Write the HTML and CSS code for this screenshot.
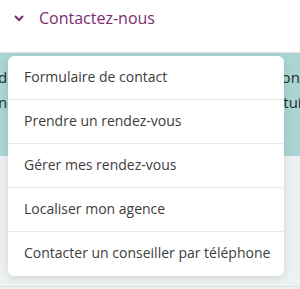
FILE: index.html
```
<!DOCTYPE html>
<html>
<head>
    <title>Contactez-nous</title>
    <link rel="stylesheet" href="styles.css">
</head>
<body>
    <div class="page">
        <div class="accordion">
            <svg class="chevron" width="12" height="8" viewBox="0 0 12 8">
                <path d="M2 2 L6 6 L10 2" fill="none" stroke="#7b2c6f" stroke-width="2"/>
            </svg>
            <span class="accordion-title">Contactez-nous</span>
        </div>
        <div class="hero">
            <div class="hero-line"><span>de nos conseillers</span><span>à vos questions</span></div>
            <div class="hero-line"><span>ne vous coûte rien,</span><span>c'est gratuit</span></div>
        </div>
        <div class="footer-zone"></div>

        <!-- menu deroulant -->
        <ul class="menu">
            <li class="menu-item">Formulaire de contact</li>
            <li class="menu-item">Prendre un rendez-vous</li>
            <li class="menu-item">Gérer mes rendez-vous</li>
            <li class="menu-item">Localiser mon agence</li>
            <li class="menu-item">Contacter un conseiller par téléphone</li>
        </ul>
    </div>
</body>
</html>
```
FILE: styles.css
```
body {
    margin: 0;
    font-family: "Open Sans", "Noto Sans", sans-serif;
    background-color: #edf1f2;
}
.page {
    position: relative;
    height: 289px;
    overflow: hidden;
}
.accordion {
    display: flex;
    align-items: flex-start;
    height: 53px;
    padding: 7px 0 0 13px;
    box-sizing: border-box;
    background-color: #fff;
    border-bottom: 1px solid #e4e7e8;
}
.chevron {
    margin: 7px 14px 0 0;
}
.accordion-title {
    color: #7b2c6f;
    font-size: 16px;
    font-weight: 500;
    line-height: 22px;
}
.hero {
    background-color: #a9d6d2;
    height: 103px;
    padding-top: 12px;
    box-sizing: border-box;
}
.hero-line {
    display: flex;
    justify-content: space-between;
    font-size: 15px;
    line-height: 25px;
    color: #1f2a2e;
    margin: 0 -7px 0 -2px;
    white-space: nowrap;
}
.footer-zone {
    height: 130px;
    border-bottom: 1px solid #dde2e4;
}
.menu {
    position: absolute;
    top: 56px;
    left: 8px;
    width: 276px;
    margin: 0;
    padding: 0;
    list-style: none;
    background-color: #fff;
    border-radius: 6px;
    box-shadow: 0 2px 8px rgba(0, 0, 0, 0.12);
}
.menu-item {
    height: 44px;
    line-height: 42px;
    padding-left: 16px;
    font-size: 14px;
    font-weight: 500;
    color: #3d3d3d;
    border-bottom: 1px solid #e9e9e9;
    box-sizing: border-box;
}
.menu-item:last-child {
    border-bottom: none;
}
```
